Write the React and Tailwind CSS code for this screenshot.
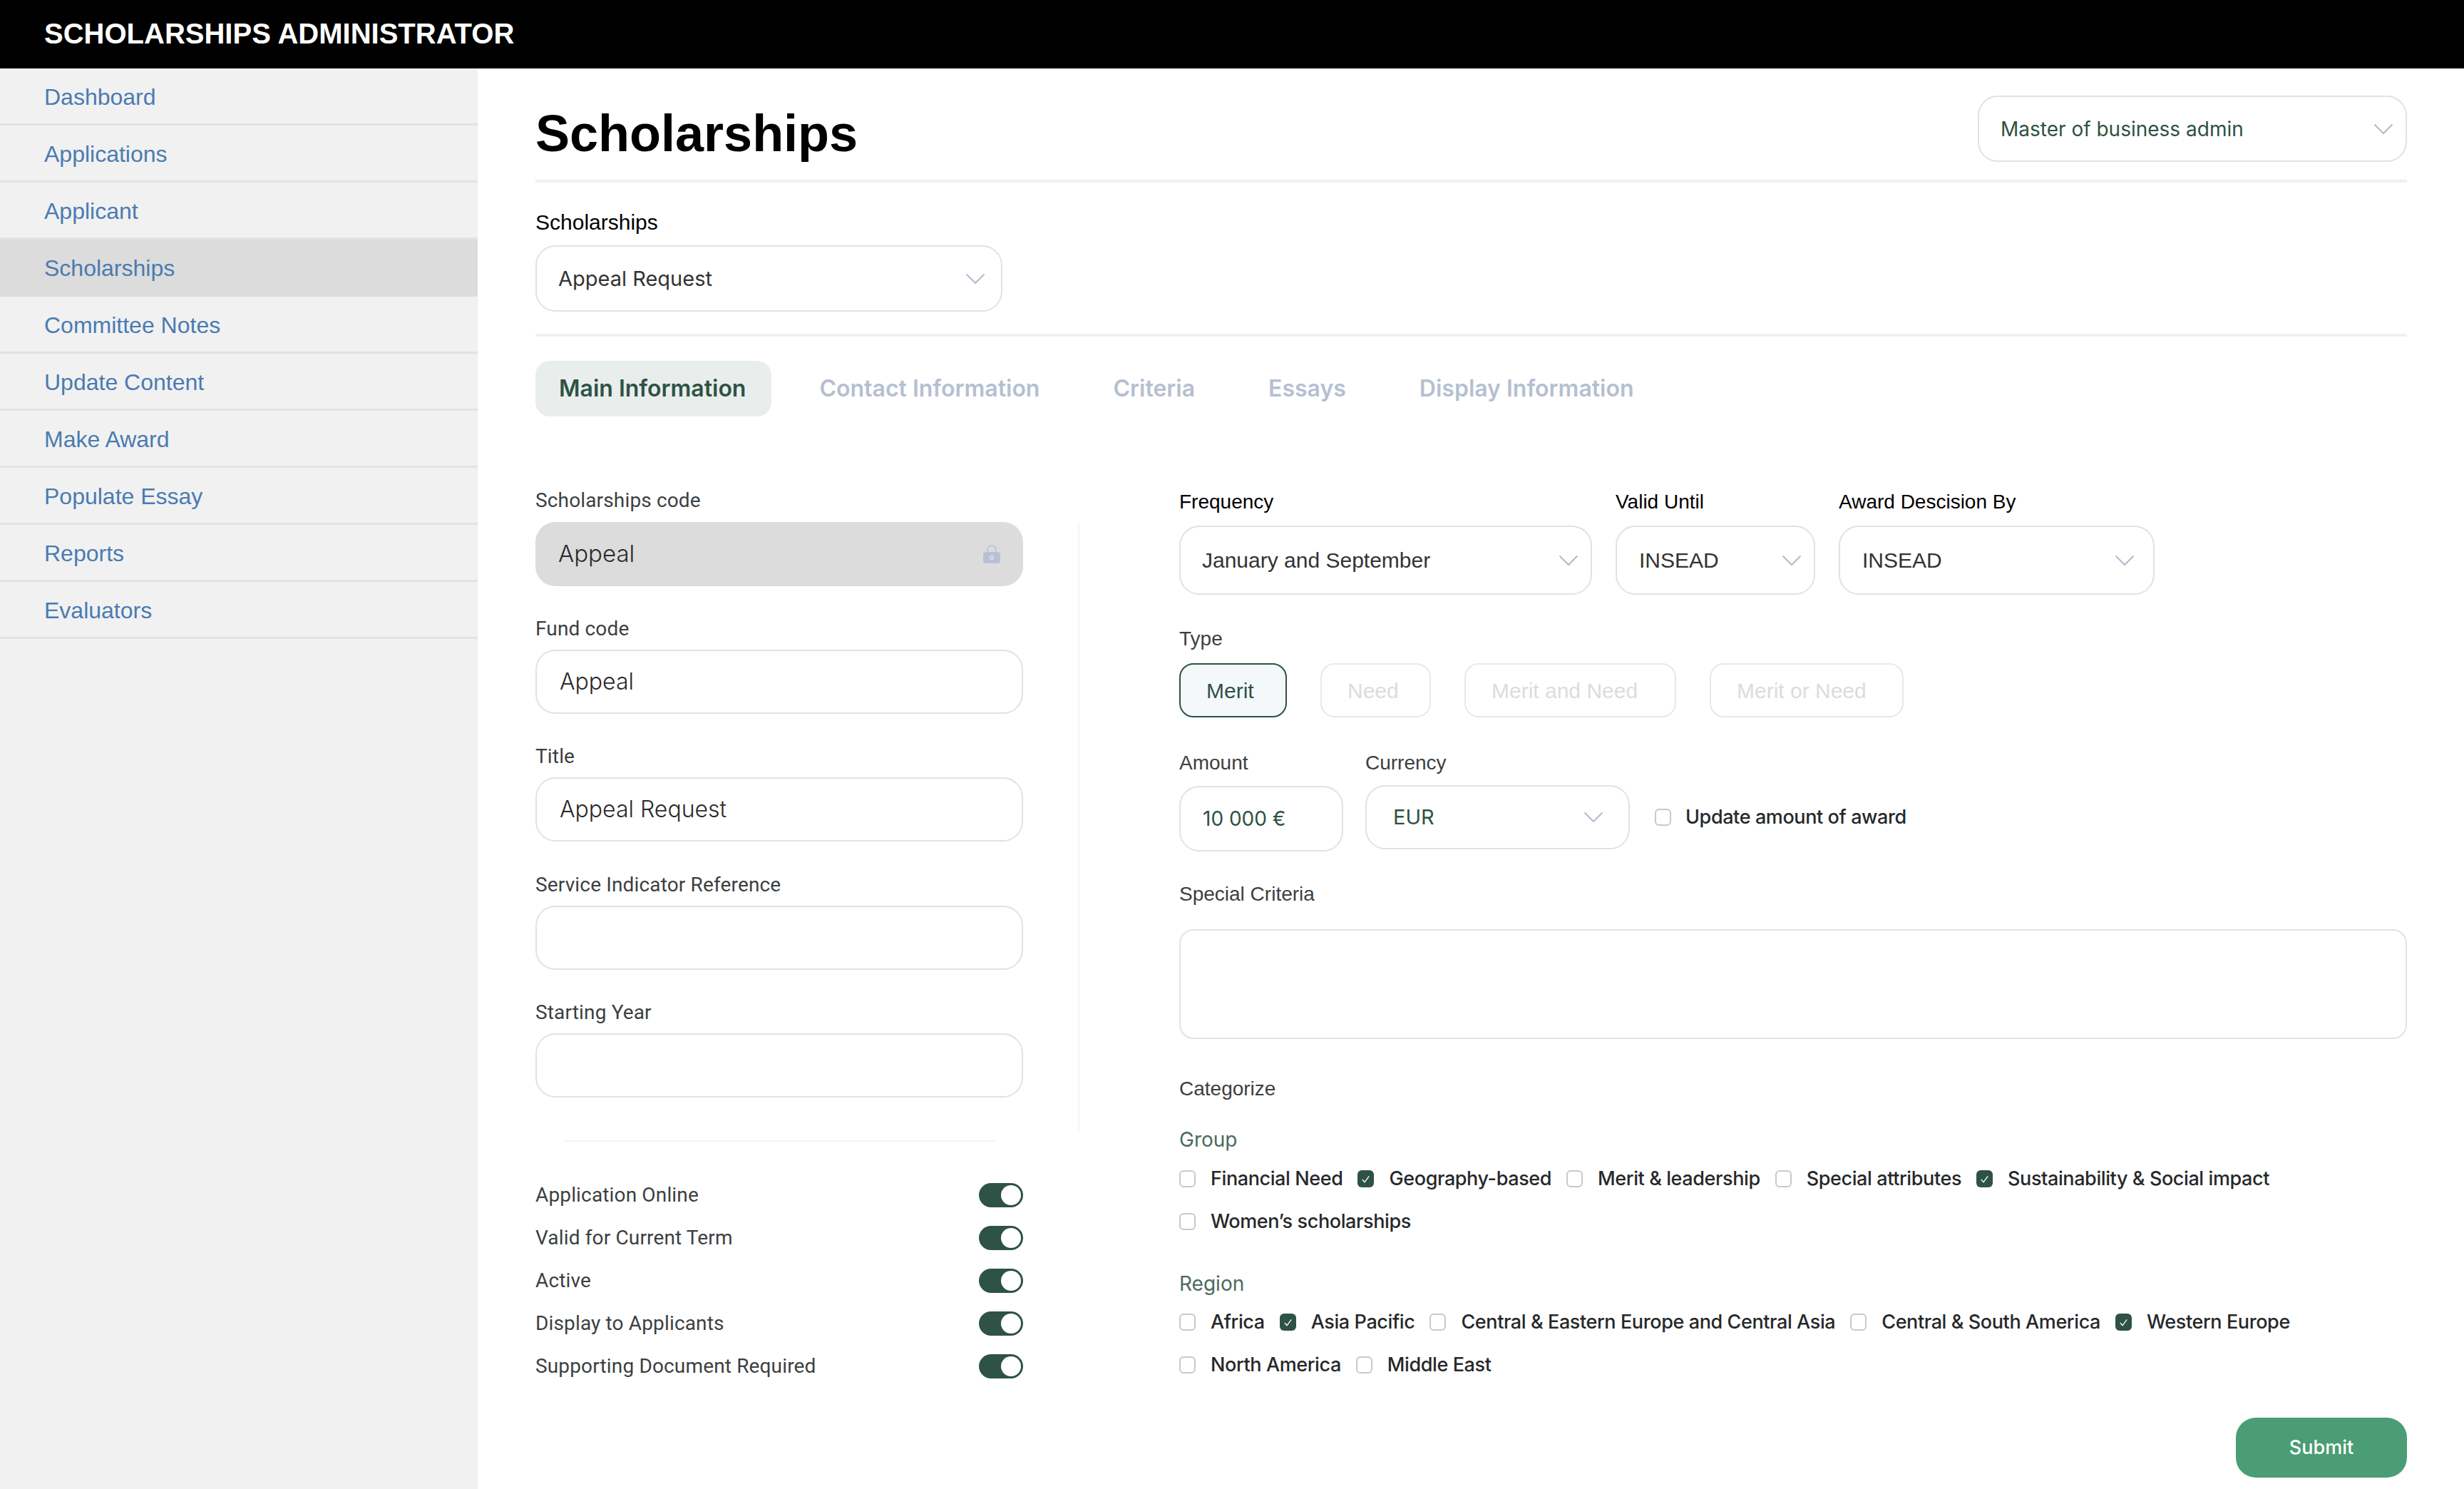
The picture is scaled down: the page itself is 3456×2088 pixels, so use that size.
import React from 'react'

const navItems = ['Dashboard', 'Applications', 'Applicant', 'Scholarships', 'Committee Notes', 'Update Content', 'Make Award', 'Populate Essay', 'Reports', 'Evaluators']
const tabs = ['Main Information', 'Contact Information', 'Criteria', 'Essays', 'Display Information']
const toggles = ['Application Online', 'Valid for Current Term', 'Active', 'Display to Applicants', 'Supporting Document Required']
const groups = [
  ['Financial Need', false],
  ['Geography-based', true],
  ['Merit & leadership', false],
  ['Special attributes', false],
  ['Sustainability & Social impact', true],
  ['Women’s scholarships', false],
]
const regions = [
  ['Africa', false],
  ['Asia Pacific', true],
  ['Central & Eastern Europe and Central Asia', false],
  ['Central & South America', false],
  ['Western Europe', true],
  ['North America', false],
  ['Middle East', false],
]

const Chevron = () => (
  <svg viewBox="0 0 28 16" className="w-[28px] h-[16px] shrink-0" fill="none" stroke="#b5b9cd" strokeWidth="2">
    <path d="M1.5 1.5 L14 14 L26.5 1.5" />
  </svg>
)

const Lock = () => (
  <svg viewBox="0 0 24 26" className="w-[24px] h-[26px]">
    <path d="M6 12 V7 a6 6 0 0 1 12 0 V12" fill="none" stroke="#b7c1d6" strokeWidth="1.6" />
    <rect x="0" y="10" width="24" height="16" rx="4" fill="#b7c1d6" />
    <circle cx="12" cy="18" r="2.4" fill="none" stroke="#e4e7ee" strokeWidth="1.2" />
  </svg>
)

const Select = ({ value, className, textClass }) => (
  <div className={`flex items-center justify-between border-2 border-[#e2e2e4] rounded-[28px] ${className}`}>
    <span className={textClass}>{value}</span>
    <Chevron />
  </div>
)

const LeftField = ({ label, value }) => (
  <div className="mb-[46.5px]">
    <div className="h-[28px] mb-[15px] leading-[28px] text-[28px] tracking-[0.15px] text-[#3c3f41] font-['Roboto',sans-serif]">{label}</div>
    <div className="h-[90px] flex items-center pl-[32px] border-2 border-[#e2e2e4] rounded-[28px] text-[32px] text-[#2a2a2a] font-['Inter',sans-serif] font-light">{value}</div>
  </div>
)

const Label = ({ children, className = '' }) => (
  <div className={`h-[28px] leading-[28px] text-[28px] ${className}`}>{children}</div>
)

const Box = ({ checked }) =>
  checked ? (
    <div className="w-[23px] h-[24px] rounded-[6px] bg-[#2e5244] flex items-center justify-center">
      <svg viewBox="0 0 16 16" className="w-[15px] h-[15px]" fill="none" stroke="#fff" strokeWidth="1.4">
        <path d="M3 8.5 L6.5 12.5 L13 3.5" />
      </svg>
    </div>
  ) : (
    <div className="w-[23px] h-[24px] rounded-[6px] border-2 border-[#c9c9cb] bg-white" />
  )

const Check = ({ label, checked }) => (
  <div className="h-[60px] flex items-center gap-[21px]">
    <Box checked={checked} />
    <span className="text-[27px] font-medium text-[#26282a] font-['Inter',sans-serif] tracking-[-0.4px]">{label}</span>
  </div>
)

const TypeBtn = ({ label, active, width }) => (
  <div className={`h-[76px] ${width} flex items-center pl-[36px] rounded-[20px] border-2 text-[30px] font-['Liberation_Sans',sans-serif] ${active ? 'border-[#2e5244] bg-[#f5f8fb] text-[#2e5244]' : 'border-[#e8e8ea] text-[#dcdcdc]'}`}>
    {label}
  </div>
)

const App = () => {
  return (
    <div className="w-[3456px] h-[2088px] flex flex-col bg-white overflow-hidden font-['Liberation_Sans',sans-serif]">
      <header className="h-[96px] bg-black flex items-center pl-[62px] pb-[2px] shrink-0">
        <span className="text-[40px] font-bold text-white">SCHOLARSHIPS ADMINISTRATOR</span>
      </header>
      <div className="flex flex-1">
        <aside className="w-[670px] shrink-0 bg-[#f1f1f1]">
          {navItems.map((item) => (
            <div
              key={item}
              className={`h-[80px] flex items-center pl-[62px] pt-[3px] text-[32px] text-[#4a7bb1] border-b-[3px] ${item === 'Scholarships' ? 'bg-[#dcdcdc] border-[#dcdcdc]' : 'border-[#e2e2e2]'}`}
            >
              {item}
            </div>
          ))}
        </aside>
        <main className="flex-1 pl-[81px] pr-[80px]">
          <div className="h-[160px] flex items-center justify-between border-b-4 border-[#f0f0f0]">
            <h1 className="text-[72px] font-bold text-black mt-[26px]">Scholarships</h1>
            <Select
              value="Master of business admin"
              className="w-[602px] h-[93px] pl-[30px] pr-[17px] mt-[13px]"
              textClass="text-[28px] text-[#2e5244] font-['Inter',sans-serif]"
            />
          </div>
          <div className="h-[216px] border-b-4 border-[#f0f0f0] pt-[38px]">
            <div className="text-[30px] leading-[36px] text-black">Scholarships</div>
            <Select
              value="Appeal Request"
              className="w-[655px] h-[93px] pl-[30px] pr-[22px] mt-[14px]"
              textClass="text-[29px] text-[#333] font-['Inter',sans-serif]"
            />
          </div>
          <div className="flex items-center gap-[37px] mt-[34px] h-[78px]">
            {tabs.map((tab, i) => (
              <div
                key={tab}
                className={`h-[78px] flex items-center rounded-[20px] text-[32px] font-semibold font-['Inter',sans-serif] ${i === 0 ? 'pl-[33px] pr-[36px] mr-[-3px] bg-[#e9eeec] text-[#2e5244]' : 'px-[33px] text-[#b5bfd2]'}`}
              >
                {tab}
              </div>
            ))}
          </div>

          <div className="flex mt-[104px]">
            <div className="w-[684px] shrink-0">
              <div className="mb-[45.5px]">
                <div className="h-[28px] mb-[16px] leading-[28px] text-[28px] tracking-[0.15px] text-[#3c3f41] font-['Roboto',sans-serif]">Scholarships code</div>
                <div className="h-[90px] flex items-center justify-between px-[32px] bg-[#dcdcdc] rounded-[28px] text-[33px] text-[#2a2a2a] font-['Inter',sans-serif] font-light">
                  Appeal
                  <Lock />
                </div>
              </div>
              <LeftField label="Fund code" value="Appeal" />
              <LeftField label="Title" value="Appeal Request" />
              <LeftField label="Service Indicator Reference" value="" />
              <LeftField label="Starting Year" value="" />
              <div className="h-[2px] bg-[#f5f5f5] mx-[38px] mt-[60px] mb-[45px]" />
              {toggles.map((t) => (
                <div key={t} className="h-[60px] flex items-center justify-between">
                  <span className="text-[28px] tracking-[0.15px] text-[#3c3f41] font-['Roboto',sans-serif]">{t}</span>
                  <div className="w-[62px] h-[34px] rounded-full bg-[#2e5244] flex items-center justify-end pr-[3px]">
                    <div className="w-[28px] h-[28px] rounded-full bg-white" />
                  </div>
                </div>
              ))}
            </div>

            <div className="w-[2px] h-[857px] bg-[#f5f5f5] mt-[44px] ml-[77px] mr-[140px] shrink-0" />

            <div className="flex-1 pt-[1px]">
              <div className="flex gap-[33px]">
                <div>
                  <Label className="pt-[1px] mb-[20px] text-black">Frequency</Label>
                  <Select value="January and September" className="w-[579px] h-[97px] pl-[30px] pr-[17px]" textClass="text-[30px] text-[#333]" />
                </div>
                <div>
                  <Label className="pt-[1px] mb-[20px] text-black">Valid Until</Label>
                  <Select value="INSEAD" className="w-[280px] h-[97px] pl-[31px] pr-[17px]" textClass="text-[30px] text-[#333]" />
                </div>
                <div>
                  <Label className="pt-[1px] mb-[20px] text-black">Award Descision By</Label>
                  <Select value="INSEAD" className="w-[443px] h-[97px] pl-[31px] pr-[26px]" textClass="text-[30px] text-[#333]" />
                </div>
              </div>

              <Label className="mt-[48px] mb-[20px] text-[#3c3f41]">Type</Label>
              <div className="flex gap-[47px]">
                <TypeBtn label="Merit" active width="w-[151px]" />
                <TypeBtn label="Need" width="w-[155px]" />
                <TypeBtn label="Merit and Need" width="w-[297px]" />
                <TypeBtn label="Merit or Need" width="w-[272px]" />
              </div>

              <div className="flex items-start gap-[31px] mt-[50px]">
                <div>
                  <Label className="mb-[18px] text-[#3c3f41]">Amount</Label>
                  <div className="w-[230px] h-[92px] flex items-center pl-[31px] border-2 border-[#e2e2e4] rounded-[28px] text-[28px] text-[#2e5244] font-['Inter',sans-serif]">10 000 €</div>
                </div>
                <div>
                  <Label className="mb-[17px] text-[#3c3f41]">Currency</Label>
                  <Select value="EUR" className="w-[371px] h-[90px] pl-[37px] pr-[35px]" textClass="text-[29px] text-[#2e5244] font-['Inter',sans-serif]" />
                </div>
                <div className="flex items-center gap-[20px] h-[90px] mt-[45px] ml-[4px]">
                  <Box />
                  <span className="text-[27px] font-medium text-[#26282a] font-['Inter',sans-serif] tracking-[-0.4px]">Update amount of award</span>
                </div>
              </div>

              <Label className="mt-[46px] mb-[35px] text-[#3c3f41]">Special Criteria</Label>
              <div className="h-[154px] border-2 border-[#e2e2e4] rounded-[20px]" />

              <Label className="mt-[56px] text-[#3c3f41]">Categorize</Label>
              <Label className="mt-[43px] mb-[11px] text-[#4a6a5e] font-['Inter',sans-serif]">Group</Label>
              <div className="flex flex-wrap gap-x-[21px]">
                {groups.map(([label, checked]) => (
                  <Check key={label} label={label} checked={checked} />
                ))}
              </div>
              <Label className="mt-[43px] mb-[10px] text-[#4a6a5e] font-['Inter',sans-serif]">Region</Label>
              <div className="flex flex-wrap gap-x-[21px]">
                {regions.map(([label, checked]) => (
                  <Check key={label} label={label} checked={checked} />
                ))}
              </div>
              <div className="flex justify-end mt-[44px]">
                <button className="w-[240px] h-[84px] rounded-[28px] bg-[#4a9d74] text-white text-[27px] font-medium font-['Inter',sans-serif]">Submit</button>
              </div>
            </div>
          </div>
        </main>
      </div>
    </div>
  )
}

export default App
